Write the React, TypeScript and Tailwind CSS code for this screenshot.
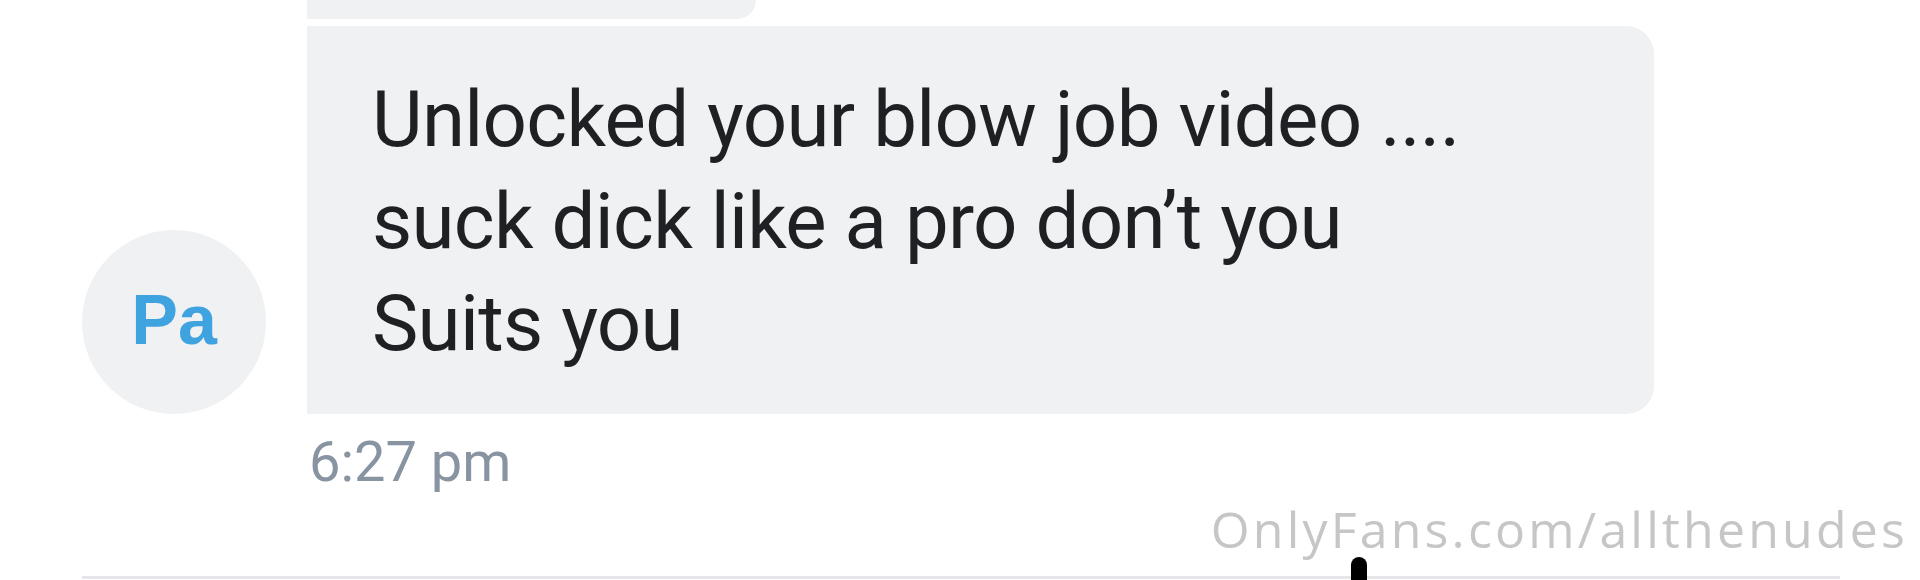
export default function App() {
  const lines = [
    "Unlocked your blow job video ....",
    "suck dick like a pro don\u2019t you",
    "Suits you",
  ];

  return (
    <div className="relative flex h-[580px] w-[1920px] flex-col overflow-hidden bg-white font-['Roboto',sans-serif]">
      {/* previous bubble, cut off at the top */}
      <div className="ml-[307px] h-[19px] w-[449px] rounded-br-[26px] bg-[#f0f1f3]" />

      <div className="mt-[7px] flex items-end pl-[82px]">
        <div className="flex h-[184px] w-[184px] shrink-0 items-center justify-center rounded-full bg-[#f0f1f3] pb-[4px]">
          <span className="font-['Liberation_Sans',sans-serif] text-[70px] font-bold leading-none text-[#3fa3df]">
            Pa
          </span>
        </div>
        <div className="ml-[41px] h-[388px] w-[1347px] rounded-r-[28px] bg-[#f0f1f3] pl-[65px] pt-[43px]">
          {lines.map((line) => (
            <p key={line} className="text-[78px] leading-[102px] tracking-[-0.7px] text-[#1f2023]">
              {line}
            </p>
          ))}
        </div>
      </div>

      <p className="ml-[309px] mt-[20px] text-[56px] leading-none text-[#8994a2]">6:27 pm</p>

      <div className="mt-auto ml-[82px] mb-[1px] h-[3px] w-[1758px] bg-[#e4e6ea]" />

      {/* watermark + stray mark over the screenshot */}
      <span className="absolute right-[12px] top-[504px] font-['Open_Sans',sans-serif] text-[50px] leading-none tracking-[3.2px] text-[#c6c6c6]">
        OnlyFans.com/allthenudes
      </span>
      <div className="absolute left-[1351px] top-[557px] h-[30px] w-[16px] rounded-t-full bg-black" />
    </div>
  );
}
